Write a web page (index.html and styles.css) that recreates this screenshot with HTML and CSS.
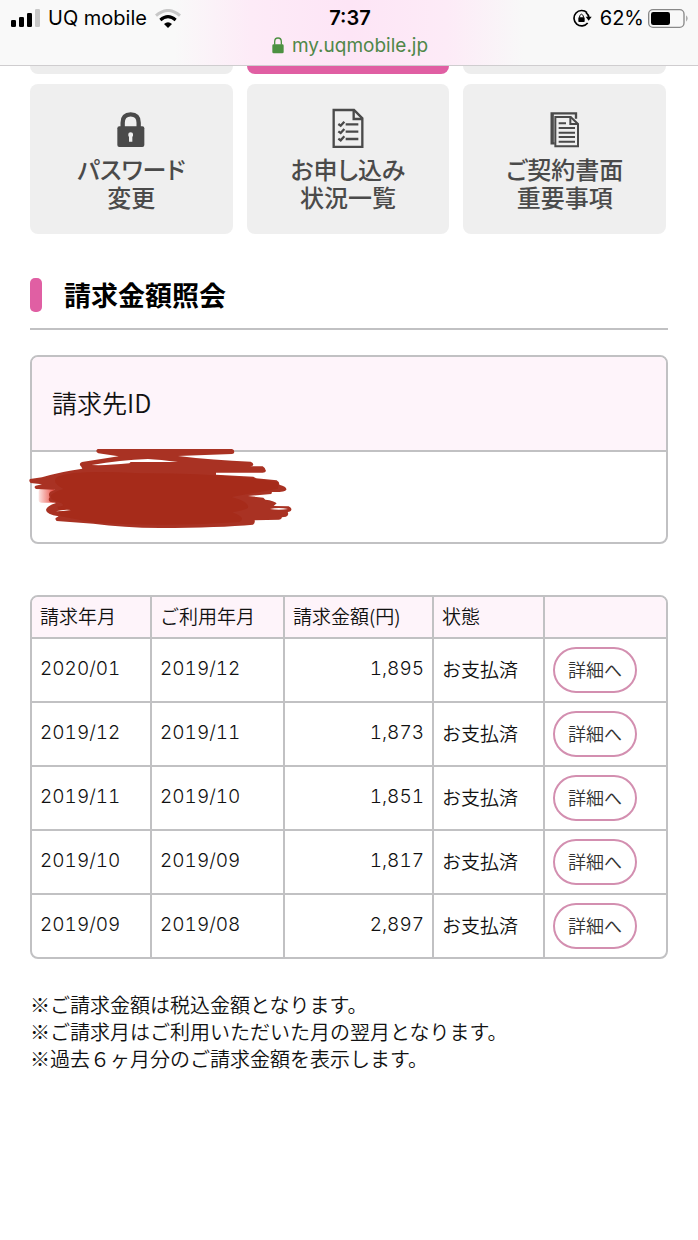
FILE: index.html
```html
<!DOCTYPE html>
<html lang="ja">
<head>
<meta charset="utf-8">
<meta name="viewport" content="width=device-width, initial-scale=1">
<title>請求金額照会</title>
<link rel="stylesheet" href="styles.css">
</head>
<body>
<header class="browser-bar">
  <div class="status">
    <div class="status-left">
      <svg class="signal" width="29" height="18" viewBox="0 0 87 54" aria-hidden="true">
        <rect x="0" y="33" width="15" height="21" rx="4"/>
        <rect x="24" y="24" width="15" height="30" rx="4"/>
        <rect x="48" y="12" width="15" height="42" rx="4"/>
        <rect x="72" y="0" width="15" height="54" rx="4" fill="#c8c8c8"/>
      </svg>
      <span>UQ mobile</span>
      <svg class="wifi" width="26" height="19" viewBox="0 0 78 57" fill="none" aria-hidden="true">
        <path d="M3 20 Q39 -11 75 20" stroke="#c8c8c8" stroke-width="9"/>
        <path d="M16 33 Q39 13 62 33" stroke="#000" stroke-width="9"/>
        <path d="M27 45 Q39 35 51 45 L39 57Z" fill="#000"/>
      </svg>
    </div>
    <time class="clock">7:37</time>
    <div class="status-right">
      <svg width="19" height="18" viewBox="0 0 57 54" fill="none" aria-hidden="true">
        <path d="M42 11 A23 23 0 1 0 44 42" stroke="#000" stroke-width="5"/>
        <path d="M39 11 Q47 17 48 27" stroke="#000" stroke-width="5"/>
        <path d="M38 23 H56 L47 35Z" fill="#000"/>
        <rect x="16" y="25" width="19" height="14" rx="2" fill="#000"/>
        <path d="M20 26 V20 Q25 11 31 20 V26" stroke="#000" stroke-width="3"/>
      </svg>
      <span>62%</span>
      <svg class="battery" width="41" height="19" viewBox="0 0 123 57" aria-hidden="true">
        <rect x="2" y="2" width="106" height="53" rx="13" fill="none" stroke="#888" stroke-width="4"/>
        <rect x="9" y="9" width="57" height="39" rx="7"/>
        <path d="M115 19 Q122 28 115 38Z" fill="#888"/>
      </svg>
    </div>
  </div>
  <div class="address">
    <svg width="12" height="17" viewBox="0 0 36 51" aria-hidden="true">
      <path d="M8 23 V14 Q8 3 18 3 Q28 3 28 14 V23" fill="none" stroke="#4c9141" stroke-width="4"/>
      <rect x="1" y="22" width="34" height="27" rx="4" fill="#4c9141"/>
    </svg>
    <span>my.uqmobile.jp</span>
  </div>
</header>

<main class="page">
  <nav class="menu">
    <div class="stub"></div>
    <div class="stub stub-current"></div>
    <div class="stub"></div>
    <a class="tile" href="#">
      <svg width="28" height="40" viewBox="0 0 84 120" aria-hidden="true">
        <path d="M17 60 V44 Q17 19 41 19 Q65 19 65 44 V60" fill="none" stroke="#4a4a4a" stroke-width="13"/>
        <rect x="1" y="55" width="81" height="62" rx="6" fill="#4a4a4a"/>
        <path d="M34 78 Q34 73 41 73 Q48 73 48 78 V83 L46 87 V101 H36 V87 L34 83Z" fill="#efefef"/>
      </svg>
      <span>パスワード<br>変更</span>
    </a>
    <a class="tile" href="#">
      <svg width="32" height="40" viewBox="0 0 96 120" fill="none" stroke="#4a4a4a" stroke-width="7" aria-hidden="true">
        <path d="M5 6 H66 L91 31 V117 H5Z"/>
        <path d="M65 7 V33 H90"/>
        <path d="M41 49 H79 M41 71 H79 M41 93 H79"/>
        <path d="M19 48 L26 53 L37 41 M19 70 L26 75 L37 63 M19 92 L26 97 L37 85"/>
      </svg>
      <span>お申し込み<br>状況一覧</span>
    </a>
    <a class="tile" href="#">
      <svg width="30" height="40" viewBox="0 0 90 120" fill="none" stroke="#4a4a4a" stroke-width="6" aria-hidden="true">
        <path d="M3 16 H78 V32 M5 13 V106 H14" stroke-width="7"/>
        <path d="M9 18 V106" stroke-width="5"/>
        <path d="M16 27 H62 L84 48 V115 H16Z"/>
        <path d="M61 26 V48 H84"/>
        <path d="M26 46 H48 M26 60 H75 M26 74 H75 M26 87 H75 M26 101 H75"/>
      </svg>
      <span>ご契約書面<br>重要事項</span>
    </a>
  </nav>

  <h1 class="title">請求金額照会</h1>

  <section class="account">
    <h2 class="account-label">請求先ID</h2>
    <div class="account-value">
      <svg class="scribble" width="290" height="125" viewBox="0 0 870 375" fill="#a62b1a" aria-hidden="true">
        <defs>
          <linearGradient id="smear"><stop offset="0" stop-color="#e8453a" stop-opacity=".15"/><stop offset="1" stop-color="#e8453a"/></linearGradient>
        </defs>
        <rect x="56" y="176" width="50" height="42" rx="9" fill="url(#smear)"/>
        <path fill="#a93223" d="M233 57 H636 Q643 59 643 66 Q642 72 636 72 L474 78 Q580 91 692 95 Q700 98 700 104 Q699 109 690 109 H728 Q738 115 738 123 Q736 128 728 128 H588 V134 L700 140 L708 145 L770 151 Q779 157 778 164 Q801 170 799 179 Q796 187 756 186 L754 192 L684 198 L730 203 L736 209 Q763 212 770 220 L761 228 L806 229 Q816 234 814 239 Q813 245 803 246 Q808 256 798 260 L786 262 Q785 269 777 269 L704 271 Q706 280 699 284 Q600 293 420 294 Q310 293 220 281 L110 273 Q105 269 107 264 L116 259 Q79 253 78 240 Q80 228 108 219 L90 215 Q83 209 89 202 Q84 190 91 185 L105 179 L48 177 Q40 171 47 167 L66 163 L32 159 Q25 152 30 147 L66 142 Q120 125 187 116 L184 110 Q174 101 186 96 L296 79 L235 70 Q224 64 233 57Z"/>
        <path d="M116 139 Q170 118 360 130 Q520 129 680 143 Q716 146 775 157 L774 176 Q700 189 635 201 Q688 216 684 233 Q675 241 637 247 Q680 263 659 276 Q450 291 224 278 L122 259 L112 230 Q150 227 107 214 Q87 207 94 194 Q104 185 131 177 Q88 154 116 139Z"/>
        <path d="M750 237 Q776 231 804 237 Q776 241 750 237Z M108 244 Q127 238 153 240 Q128 244 108 244Z" fill="#fff"/>
        <path d="M215 105 Q300 90 384 87 Q420 89 474 96 L332 96 L328 100 Q260 107 215 105Z" fill="#fff"/>
      </svg>
    </div>
  </section>

  <div class="bills">
    <table>
      <colgroup><col class="c-billed"><col class="c-used"><col class="c-amount"><col class="c-state"><col></colgroup>
      <thead>
        <tr><th scope="col">請求年月</th><th scope="col">ご利用年月</th><th scope="col">請求金額(円)</th><th scope="col">状態</th><td></td></tr>
      </thead>
      <tbody>
        <tr><td class="num">2020/01</td><td class="num">2019/12</td><td class="num amount">1,895</td><td>お支払済</td><td class="action"><button type="button">詳細へ</button></td></tr>
        <tr><td class="num">2019/12</td><td class="num">2019/11</td><td class="num amount">1,873</td><td>お支払済</td><td class="action"><button type="button">詳細へ</button></td></tr>
        <tr><td class="num">2019/11</td><td class="num">2019/10</td><td class="num amount">1,851</td><td>お支払済</td><td class="action"><button type="button">詳細へ</button></td></tr>
        <tr><td class="num">2019/10</td><td class="num">2019/09</td><td class="num amount">1,817</td><td>お支払済</td><td class="action"><button type="button">詳細へ</button></td></tr>
        <tr><td class="num">2019/09</td><td class="num">2019/08</td><td class="num amount">2,897</td><td>お支払済</td><td class="action"><button type="button">詳細へ</button></td></tr>
      </tbody>
    </table>
  </div>

  <p class="notes">※ご請求金額は税込金額となります。<br>※ご請求月はご利用いただいた月の翌月となります。<br>※過去６ヶ月分のご請求金額を表示します。</p>
</main>
</body>
</html>
```

FILE: styles.css
```css
* { box-sizing: border-box; }

body {
  margin: 0;
  background: #fff;
  color: #111;
  font-family: "Noto Sans CJK JP", sans-serif;
  font-weight: 350;
}

.browser-bar {
  height: 66px;
  padding: 4px 9px 0 11px;
  border-bottom: 1px solid #cfcdcf;
  background: linear-gradient(90deg, #f9f9f9 25%, #fdebf7 36%, #fde5f6 50%, #fdebf7 64%, #f8f8f8 75%);
  color: #000;
  font: 400 20px/28px Inter, sans-serif;
}

.status {
  display: grid;
  grid-template-columns: 1fr auto 1fr;
  align-items: center;
}

.status-left,
.status-right,
.address {
  display: flex;
  align-items: center;
}

.status-left { gap: 8px; }
.status-right { justify-content: flex-end; gap: 8px; }
.battery { margin-left: -4px; }
.clock { font-weight: 600; }

.address {
  justify-content: center;
  gap: 8px;
  color: #4f8748;
  font-size: 19px;
  line-height: 27px;
}

.page { padding: 0 30px 160px; }

.menu {
  display: grid;
  grid-template-columns: repeat(3, 1fr);
  column-gap: 14px;
  row-gap: 10px;
  padding-right: 2px;
}

.stub {
  height: 8px;
  border-radius: 0 0 8px 8px;
  background: #ededed;
}

.stub-current { background: #e05fa3; }

.tile {
  display: flex;
  flex-direction: column;
  align-items: center;
  gap: 7px;
  height: 150px;
  padding-top: 24px;
  border-radius: 8px;
  background: #efefef;
  color: #4a4a4a;
  font-size: 24px;
  font-weight: 500;
  font-feature-settings: "palt";
  line-height: 28px;
  text-align: center;
  text-decoration: none;
}

.title {
  display: flex;
  align-items: center;
  gap: 22px;
  margin: 44px 0 25px;
  padding-bottom: 16px;
  border-bottom: 2px solid #c1c1c3;
  color: #000;
  font-size: 27px;
  font-weight: 700;
  line-height: 34px;
}

.title::before {
  content: "";
  width: 12px;
  height: 34px;
  border-radius: 5px;
  background: #e05fa3;
}

.account {
  border: 2px solid #c1c1c3;
  border-radius: 8px;
}

.account-label {
  margin: 0;
  padding: 25px 20px 27px;
  border-bottom: 2px solid #c1c1c3;
  border-radius: 6px 6px 0 0;
  background: #fef4fa;
  font-size: 25px;
  font-weight: 350;
  line-height: 41px;
}

.account-value {
  position: relative;
  height: 90px;
}

.scribble {
  position: absolute;
  top: -22px;
  left: -12px;
}

.bills {
  margin-top: 51px;
  overflow: hidden;
  border: 2px solid #c1c1c3;
  border-radius: 8px;
}

.bills table {
  width: 100%;
  table-layout: fixed;
  border-spacing: 0;
}

.c-billed { width: 120px; }
.c-used { width: 133px; }
.c-amount { width: 149px; }
.c-state { width: 111px; }

.bills th,
.bills td {
  height: 64px;
  padding: 0 8px 3px;
  border-right: 2px solid #c1c1c3;
  border-bottom: 2px solid #c1c1c3;
  font-size: 19px;
  font-weight: 350;
  line-height: 28px;
  text-align: left;
  white-space: nowrap;
}

.bills thead th,
.bills thead td {
  height: 42px;
  padding-bottom: 2px;
  background: #fef4fa;
}

.bills .num {
  font-family: Inter, sans-serif;
  font-variant-numeric: tabular-nums;
}

.bills .action { padding-bottom: 0; }
.bills tr > :last-child { border-right: 0; }
.bills tbody tr:last-child td { height: 62px; border-bottom: 0; }
.bills tbody .amount { text-align: right; }

.bills button {
  display: block;
  width: 84px;
  height: 46px;
  padding: 0 0 3px;
  border: 2px solid #d38fb0;
  border-radius: 23px;
  background: #fff;
  color: #333;
  font: 350 18px/28px "Noto Sans CJK JP", sans-serif;
}

.notes {
  margin: 32px 0 0;
  font-size: 20px;
  line-height: 27px;
}
```
